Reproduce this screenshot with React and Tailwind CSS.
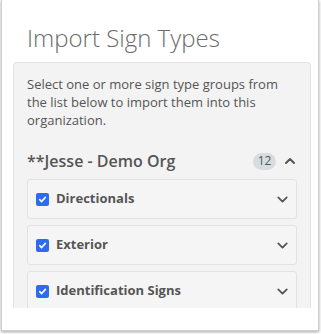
import { ChevronDown, ChevronUp } from 'lucide-react';

const groups = ['Directionals', 'Exterior', 'Identification Signs'];

function Check() {
  return (
    <span className="w-[13px] h-[13px] rounded-[2px] bg-[#2f6bf0] flex items-center justify-center shrink-0">
      <svg width="9" height="9" viewBox="0 0 10 10" fill="none">
        <path d="M2 5.2l2 2.1L8.2 2.6" stroke="white" strokeWidth="1.8" strokeLinecap="round" strokeLinejoin="round" />
      </svg>
    </span>
  );
}

function GroupRow({ name }) {
  return (
    <div className="h-[40px] shrink-0 rounded-[3px] border border-[#e2e2e2] bg-[#f5f5f5] flex items-center pl-[8px] pr-[5px]">
      <Check />
      <span className="ml-[7px] text-[13px] font-bold text-[#555]">{name}</span>
      <ChevronDown className="ml-auto text-[#555]" size={17} strokeWidth={2.5} />
    </div>
  );
}

export default function App() {
  return (
    <div className="w-[321px] h-[334px] bg-white overflow-hidden" style={{ fontFamily: '"Open Sans", sans-serif' }}>
      <div className="ml-[1px] w-[318px] h-[331px] border border-t-0 border-[#cfcfcf] bg-white shadow-[0_1px_3px_rgba(0,0,0,0.35)] flex flex-col">
        {/* Header */}
        <h1 className="pl-[25px] pt-[23px] text-[24px] font-light leading-[30px] text-[#6b6b6b]">Import Sign Types</h1>

        {/* Scroll panel */}
        <div className="mt-[9px] ml-[11px] w-[298px] h-[246px] overflow-hidden rounded-t-[4px] border border-b-0 border-[#e3e3e3] bg-[#f3f3f3] pl-[13px] pr-[13px] pt-[12px]">
          <p className="text-[13px] leading-[18px] text-[#555]">
            Select one or more sign type groups from the list below to import them into this organization.
          </p>
          <div className="mt-[22px] flex items-center h-[20px]">
            <span className="text-[16px] font-semibold text-[#555]">**Jesse - Demo Org</span>
            <span className="ml-auto h-[17px] w-[23px] rounded-full bg-[#d6dde1] text-[12px] text-[#555] flex items-center justify-center">12</span>
            <ChevronUp className="ml-[6px] mr-[-1px] text-[#555]" size={16} strokeWidth={3} />
          </div>
          <div className="mt-[8px] flex flex-col gap-[6px]">
            {groups.map(g => <GroupRow key={g} name={g} />)}
          </div>
        </div>
      </div>
    </div>
  );
}
